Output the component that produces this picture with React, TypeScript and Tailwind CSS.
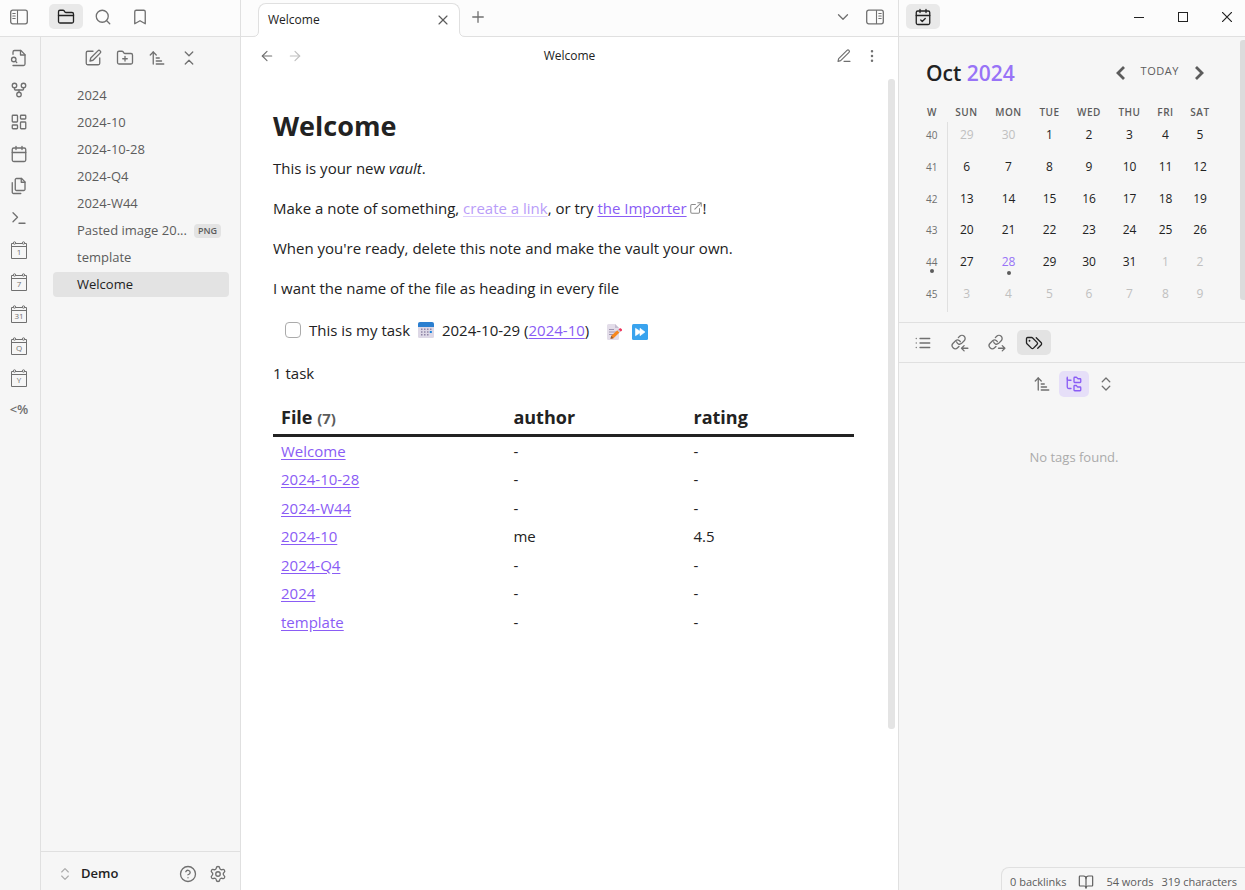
import type { ReactNode } from "react";
import {
  ArrowLeft,
  ArrowRight,
  ArrowUpNarrowWide,
  BookOpen,
  Bookmark,
  Calendar,
  ChevronDown,
  ChevronsDownUp,
  ChevronsUpDown,
  CircleQuestionMark,
  EllipsisVertical,
  FolderClosed,
  FolderPlus,
  FolderTree,
  GitFork,
  LayoutDashboard,
  Plus,
  Search,
  Settings,
  Terminal,
  X,
} from "lucide-react";

type SvgProps = { children: ReactNode; className?: string; width?: number };

function Svg({ children, className = "size-[18px]", width = 1.75 }: SvgProps) {
  return (
    <svg
      viewBox="0 0 24 24"
      className={className}
      fill="none"
      stroke="currentColor"
      strokeWidth={width}
      strokeLinecap="round"
      strokeLinejoin="round"
      aria-hidden="true"
    >
      {children}
    </svg>
  );
}

function SidebarIcon({ side }: { side: "left" | "right" }) {
  return (
    <svg viewBox="0 0 18 16" className="h-4 w-[18px]" fill="none" stroke="currentColor" strokeLinecap="round" aria-hidden="true">
      <rect x="0.7" y="1.2" width="16.6" height="13.6" rx="2" strokeWidth="1.3" />
      {side === "left" ? (
        <path d="M7.500 1.500v13M2.800 4.500h2.400M2.800 7h2.400M2.800 9.500h2.400" strokeWidth="1.1" />
      ) : (
        <path d="M10.500 1.500v13M12.800 4.500h2.400M12.800 7h2.400M12.800 9.500h2.400" strokeWidth="1.1" />
      )}
    </svg>
  );
}

function FileSearchIcon() {
  return (
    <Svg>
      <path d="M4 22h14a2 2 0 0 0 2-2V7.5L14.5 2H6a2 2 0 0 0-2 2v3" />
      <path d="M14 2v6h6" />
      <circle cx="5" cy="14" r="3" />
      <path d="m9 18-1.5-1.5" />
    </Svg>
  );
}

function FilesIcon() {
  return (
    <Svg>
      <path d="M15.5 2H8.6c-.4 0-.8.2-1.1.5-.3.3-.5.7-.5 1.1v12.8c0 .4.2.8.5 1.1.3.3.7.5 1.1.5h9.8c.4 0 .8-.2 1.1-.5.3-.3.5-.7.5-1.1V6.5L15.5 2z" />
      <path d="M3 7.6v12.8c0 .4.2.8.5 1.1.3.3.7.5 1.1.5h9.8" />
      <path d="M15 2v5h5" />
    </Svg>
  );
}

function EditIcon() {
  return (
    <Svg>
      <path d="M12 3H5a2 2 0 0 0-2 2v14a2 2 0 0 0 2 2h14a2 2 0 0 0 2-2v-7" />
      <path d="M18.5 2.5a2.12 2.12 0 0 1 3 3L12 15l-4 1 1-4Z" />
    </Svg>
  );
}

function PenLineIcon() {
  return (
    <Svg className="size-4">
      <path d="M12 20h9" />
      <path d="M16.5 3.5a2.12 2.12 0 0 1 3 3L7 19l-4 1 1-4Z" />
    </Svg>
  );
}

function CalendarCheckIcon() {
  return (
    <Svg>
      <rect x="3" y="4" width="18" height="18" rx="2" />
      <path d="M16 2v4M8 2v4M3 10h18M9 16l2 2 4-4" />
    </Svg>
  );
}

function ListIcon() {
  return (
    <Svg>
      <path d="M8 6h13M8 12h13M8 18h13M3 6h.01M3 12h.01M3 18h.01" />
    </Svg>
  );
}

function LinkArrowIcon({ direction }: { direction: "in" | "out" }) {
  return (
    <Svg>
      <path d="M7.500 10.500a4 4 0 0 0 6.300 2.300l3.800-3.800a4.200 4.200 0 0 0-6-6L9.800 4.800" />
      <path d="M12.500 10.300a4 4 0 0 0-6-1.600l-3.700 3.700a4.200 4.200 0 0 0 6 6l1.800-1.800" />
      {direction === "in" ? <path d="M22.500 19h-8M17.500 15.500 14 19l3.500 3.500" /> : <path d="M14 19h8M19 15.500l3.500 3.500-3.500 3.500" />}
    </Svg>
  );
}

function TagsIcon() {
  return (
    <Svg>
      <path d="M2 6v5.500c0 .5.2 1 .6 1.400l5.900 5.900a2 2 0 0 0 2.800 0l4.800-4.800a2 2 0 0 0 0-2.800L10.200 5.300A2 2 0 0 0 8.800 4.700H3.500A1.500 1.500 0 0 0 2 6Z" />
      <path d="M6 9h.01" strokeWidth="2.400" />
      <path d="m15 5 6.400 6.300a2.400 2.400 0 0 1 0 3.400L17 19" />
    </Svg>
  );
}

function HeavyChevron({ direction }: { direction: "left" | "right" }) {
  return (
    <svg viewBox="0 0 20 20" className="size-5" fill="none" stroke="currentColor" strokeWidth="2.800" aria-hidden="true">
      {direction === "left" ? <path d="m13 4-6 6 6 6" /> : <path d="m7 4 6 6-6 6" />}
    </svg>
  );
}

function DateIcon({ text }: { text: string }) {
  return (
    <svg viewBox="0 0 18 20" className="h-5 w-[18px]" fill="none" stroke="currentColor" aria-hidden="true">
      <path d="M1.500 3.500h15v15h-15ZM1.500 6.500h15" strokeWidth="1" />
      <circle cx="4.500" cy="3" r="1.200" strokeWidth="1" fill="#f6f6f6" />
      <circle cx="13.500" cy="3" r="1.200" strokeWidth="1" fill="#f6f6f6" />
      <text
        x="9"
        y="15.400"
        fontSize="8"
        textAnchor="middle"
        fill="currentColor"
        stroke="none"
        className="font-['Open_Sans',sans-serif] font-medium"
      >
        {text}
      </text>
    </svg>
  );
}

function CalendarEmoji() {
  return (
    <svg viewBox="0 0 18 18" className="mx-[3px] inline-block size-[18px] align-[-3px]" role="img" aria-label="Due date">
      <rect x="1" y="1.500" width="16" height="15.500" rx="1.500" fill="#ddd8e6" />
      <path d="M1 3a2 2 0 0 1 2-2h12a2 2 0 0 1 2 2v3H1Z" fill="#2b7fd0" />
      <g fill="#8f84a6">
        <path d="M7 7.500h1.500V9H7ZM10 7.500h1.500V9H10ZM13 7.500h1.500V9H13ZM4 10.200h1.500v1.500H4ZM7 10.200h1.500v1.500H7ZM10 10.200h1.500v1.500H10ZM4 13h1.500v1.500H4ZM7 13h1.500v1.500H7ZM10 13h1.500v1.500H10ZM4 7.500h1.500V9H4Z" />
      </g>
      <path d="M12.800 10h2v2h-2Z" fill="#1683dc" />
    </svg>
  );
}

function MemoEmoji() {
  return (
    <svg viewBox="0 0 18 18" className="size-[18px]" aria-hidden="true">
      <path d="M2 2.500A1.500 1.500 0 0 1 3.500 1H10l4 4v10.500A1.500 1.500 0 0 1 12.500 17h-9A1.500 1.500 0 0 1 2 15.500Z" fill="#e3dde9" />
      <path d="M10 1v4h4Z" fill="#c5bdd0" />
      <path d="M4 6.500h5M4 9h7M4 11.500h4" stroke="#a096b0" strokeWidth="1" />
      <path d="M5.500 15.800 6.300 12.800 12.300 7.300 14.500 9.600 8.500 15.200Z" fill="#f7871c" />
      <path d="m12.300 7.300 1.500-1.300 2.200 2.200-1.500 1.400Z" fill="#c9c5d0" />
      <path d="m13.600 6.200 1-.8c.5-.4 1-.3 1.400.1l.8.8c.4.5.4 1 0 1.400l-1 .8Z" fill="#f0315a" />
      <path d="M5.500 15.800 6.300 12.800 8.500 15.200Z" fill="#8b5a3c" />
    </svg>
  );
}

function ForwardEmoji() {
  return (
    <svg viewBox="0 0 18 18" className="size-[18px]" aria-hidden="true">
      <rect x="1" y="1" width="16" height="16" rx="1.500" fill="#39a3ee" />
      <path d="M4.500 5.300v7.400L9 9.800v2.900L14 9 9 5.300v2.900Z" fill="#fff" stroke="#fff" strokeWidth="0.600" strokeLinejoin="round" />
    </svg>
  );
}

function IconButton({ label, className = "", children }: { label: string; className?: string; children: ReactNode }) {
  return (
    <button type="button" aria-label={label} className={`flex shrink-0 items-center justify-center rounded-[5px] ${className}`}>
      {children}
    </button>
  );
}

const tab = "h-[25px] w-[34px]";
const action = "h-[26px] w-[30px]";

const ribbon: [string, ReactNode][] = [
  ["Open quick switcher", <FileSearchIcon />],
  ["Open graph view", <GitFork size={18} />],
  ["Create new canvas", <LayoutDashboard size={18} />],
  ["Open today's daily note", <Calendar size={18} />],
  ["Insert template", <FilesIcon />],
  ["Open command palette", <Terminal size={18} />],
  ["Open daily note", <DateIcon text="1" />],
  ["Open weekly note", <DateIcon text="7" />],
  ["Open monthly note", <DateIcon text="31" />],
  ["Open quarterly note", <DateIcon text="Q" />],
  ["Open yearly note", <DateIcon text="Y" />],
  ["Templater", <span className="text-[13px] font-semibold">&lt;%</span>],
];

const files = ["2024", "2024-10", "2024-10-28", "2024-Q4", "2024-W44", "Pasted image 20...", "template", "Welcome"];

function LeftSidebar() {
  return (
    <aside className="flex w-[241px] shrink-0 flex-col border-r border-[#e0e0e0]">
      <div className="flex h-[37px] items-center border-b border-[#e0e0e0] bg-[#fcfcfc] pb-[3px] pl-[2px] text-[#707070]">
        <IconButton label="Toggle left sidebar" className={tab}>
          <SidebarIcon side="left" />
        </IconButton>
        <div className="ml-[13px] flex gap-[3px]">
          <IconButton label="Files" className={`${tab} bg-[#e9e9e9] text-[#222222]`}>
            <FolderClosed size={18} />
          </IconButton>
          <IconButton label="Search" className={tab}>
            <Search size={18} />
          </IconButton>
          <IconButton label="Bookmarks" className={tab}>
            <Bookmark size={18} />
          </IconButton>
        </div>
      </div>
      <div className="flex grow">
        <nav className="flex w-[41px] shrink-0 flex-col items-center gap-[6px] border-r border-[#e0e0e0] pt-2 pr-[2px] text-[#707070]">
          {ribbon.map(([label, icon]) => (
            <IconButton key={label} label={label} className={action}>
              {icon}
            </IconButton>
          ))}
        </nav>
        <div className="flex min-w-0 grow flex-col">
          <div className="flex justify-center gap-[2px] pt-2 pb-3 text-[#707070]">
            <IconButton label="New note" className={action}>
              <EditIcon />
            </IconButton>
            <IconButton label="New folder" className={action}>
              <FolderPlus size={18} />
            </IconButton>
            <IconButton label="Change sort order" className={action}>
              <ArrowUpNarrowWide size={18} />
            </IconButton>
            <IconButton label="Collapse all" className={action}>
              <ChevronsDownUp size={18} />
            </IconButton>
          </div>
          <ul className="flex flex-col gap-[2px] pr-[11px] pl-3 text-[13px] text-[#5c5c5c]">
            {files.map((name) => (
              <li key={name}>
                <a
                  href="#note"
                  className={`flex h-[25px] items-center rounded-[4px] pr-2 pl-6 whitespace-nowrap ${
                    name === "Welcome" ? "bg-[#e3e3e3] text-[#222222]" : ""
                  }`}
                >
                  <span>{name}</span>
                  {name.startsWith("Pasted") && (
                    <span className="ml-auto rounded-[4px] bg-[#e3e3e3] px-1 text-[9px] leading-[14px] font-semibold">
                      PNG
                    </span>
                  )}
                </a>
              </li>
            ))}
          </ul>
          <div className="mt-auto flex h-[39px] items-center border-t border-[#e0e0e0] pt-[6px] pr-[7px] pl-4 text-[#707070]">
            <button type="button" className="flex items-center gap-2 text-[13px] font-semibold text-[#222222]">
              <ChevronsUpDown size={16} className="text-[#ababab]" />
              Demo
            </button>
            <div className="ml-auto flex">
              <IconButton label="Help" className={action}>
                <CircleQuestionMark size={18} />
              </IconButton>
              <IconButton label="Settings" className={action}>
                <Settings size={18} />
              </IconButton>
            </div>
          </div>
        </div>
      </div>
    </aside>
  );
}

const rows = [
  ["Welcome", "-", "-"],
  ["2024-10-28", "-", "-"],
  ["2024-W44", "-", "-"],
  ["2024-10", "me", "4.5"],
  ["2024-Q4", "-", "-"],
  ["2024", "-", "-"],
  ["template", "-", "-"],
];

const link = "text-[#8a5cf5] underline underline-offset-2";

function Note() {
  return (
    <article className="min-w-0 grow pt-[35px] pr-[34px] pl-8 text-[15px] leading-6 text-[#222222]">
      <h1 className="text-[27px] leading-8 font-bold">Welcome</h1>
      <div className="mt-[14px] flex flex-col gap-4">
        <p>
          This is your new <em>vault</em>.
        </p>
        <p>
          Make a note of something,{" "}
          <a href="#create" className="text-[#b99df9] underline decoration-[#dccefc] underline-offset-2">
            create a link
          </a>
          , or try{" "}
          <a href="#importer" className={link}>
            the Importer
          </a>
          <Svg className="ml-[2px] inline-block size-[14px] align-[-1px] text-[#8a8a8a]">
            <path d="M18 13v6a2 2 0 0 1-2 2H5a2 2 0 0 1-2-2V8a2 2 0 0 1 2-2h6M15 3h6v6M10 14 21 3" />
          </Svg>
          !
        </p>
        <p>When you're ready, delete this note and make the vault your own.</p>
        <p>I want the name of the file as heading in every file</p>
      </div>
      <div className="mt-[18px] flex items-center pl-3">
        <input
          id="task"
          type="checkbox"
          className="mr-2 size-4 appearance-none rounded-[4px] border border-[#ababab] bg-white"
        />
        <label htmlFor="task">
          This is my task <CalendarEmoji /> 2024-10-29 (
        </label>
        <a href="#month" className={link}>
          2024-10
        </a>
        <span>)</span>
        <button type="button" aria-label="Edit task" className="mt-1 ml-4">
          <MemoEmoji />
        </button>
        <button type="button" aria-label="Postpone task" className="mt-1 ml-2">
          <ForwardEmoji />
        </button>
      </div>
      <p className="mt-[19px]">1 task</p>
      <table className="mt-4 h-[235px] w-full table-fixed text-left">
        <thead className="text-[18px]">
          <tr className="h-[34px] border-b-3 border-[#222222]">
            <th className="w-2/5 px-2 font-bold">
              File <span className="text-[15px] text-[#5c5c5c]">(7)</span>
            </th>
            <th className="w-[31%] px-2 font-bold">author</th>
            <th className="px-2 font-bold">rating</th>
          </tr>
        </thead>
        <tbody>
          {rows.map(([file, author, rating]) => (
            <tr key={file}>
              <td className="px-2">
                <a href="#file" className={link}>
                  {file}
                </a>
              </td>
              <td className="px-2">{author}</td>
              <td className="px-2">{rating}</td>
            </tr>
          ))}
        </tbody>
      </table>
    </article>
  );
}

function Editor() {
  return (
    <main className="flex min-w-0 grow flex-col bg-white text-[12px] text-[#222222]">
      <div className="flex h-[37px] items-end border-b border-[#e0e0e0] bg-[#fcfcfc] pr-[7px] pl-[17px] text-[#707070]">
        <div className="relative -mb-px flex h-[34px] w-[202px] items-center justify-between rounded-t-lg border border-b-0 border-[#e0e0e0] bg-white pr-2 pb-[2px] pl-[9px] text-[#222222]">
          <svg viewBox="0 0 6 6" className="absolute bottom-0 -left-[6px] size-[6px]" aria-hidden="true">
            <path d="M0 6V5.500Q5.500 5.500 5.500 0H6V6Z" fill="#fff" />
            <path d="M0 5.500Q5.500 5.500 5.500 0" fill="none" stroke="#e0e0e0" />
          </svg>
          <svg viewBox="0 0 6 6" className="absolute -right-[6px] bottom-0 size-[6px]" aria-hidden="true">
            <path d="M6 6V5.500Q.5 5.500.5 0H0V6Z" fill="#fff" />
            <path d="M6 5.500Q.5 5.500.5 0" fill="none" stroke="#e0e0e0" />
          </svg>
          <span>Welcome</span>
          <button type="button" aria-label="Close tab">
            <X size={16} className="text-[#5c5c5c]" />
          </button>
        </div>
        <IconButton label="New tab" className={`mb-[6px] ml-[3px] ${action}`}>
          <Plus size={18} />
        </IconButton>
        <div className="mb-[6px] ml-auto flex">
          <IconButton label="Tab list" className="h-[26px] w-8">
            <ChevronDown size={18} />
          </IconButton>
          <IconButton label="Toggle right sidebar" className="h-[26px] w-8">
            <SidebarIcon side="right" />
          </IconButton>
        </div>
      </div>
      <div className="flex h-[38px] items-center px-3 text-[#707070]">
        <div className="flex">
          <IconButton label="Back" className="h-6 w-7">
            <ArrowLeft size={16} />
          </IconButton>
          <IconButton label="Forward" className="h-6 w-7 text-[#c0c0c0]">
            <ArrowRight size={16} />
          </IconButton>
        </div>
        <span className="grow text-center text-[#222222]">Welcome</span>
        <div className="flex">
          <IconButton label="Edit" className="h-6 w-7">
            <PenLineIcon />
          </IconButton>
          <IconButton label="More options" className="h-6 w-7">
            <EllipsisVertical size={16} />
          </IconButton>
        </div>
      </div>
      <div className="flex grow">
        <Note />
        <div className="mt-1 mr-[3px] h-[650px] w-[7px] shrink-0 rounded-[3px] bg-[#e4e4e4]" />
      </div>
    </main>
  );
}

const weeks = [
  [40, 29, 30, 1, 2, 3, 4, 5],
  [41, 6, 7, 8, 9, 10, 11, 12],
  [42, 13, 14, 15, 16, 17, 18, 19],
  [43, 20, 21, 22, 23, 24, 25, 26],
  [44, 27, 28, 29, 30, 31, 1, 2],
  [45, 3, 4, 5, 6, 7, 8, 9],
];

function isOutside(week: number, day: number) {
  return (week === 40 && day > 20) || (week >= 44 && day < 20);
}

function CalendarPanel() {
  return (
    <section className="flex h-[285px] pt-[3px]">
      <div className="min-w-0 grow pt-[15px] pr-[22px] pl-[18px]">
        <div className="flex items-center pr-[9px] pl-[9px]">
          <h2 className="text-[21px] leading-9 font-semibold text-[#222222]">
            Oct <span className="text-[#9873f7]">2024</span>
          </h2>
          <div className="ml-auto flex items-center gap-[6px] text-[#5c5c5c]">
            <IconButton label="Previous month" className="size-5">
              <HeavyChevron direction="left" />
            </IconButton>
            <button type="button" className="px-1 pb-1 text-[11px] tracking-wider">
              TODAY
            </button>
            <IconButton label="Next month" className="size-5">
              <HeavyChevron direction="right" />
            </IconButton>
          </div>
        </div>
        <table className="mt-[11px] h-[210px] w-full table-fixed text-center text-[12px] text-[#222222]">
          <colgroup>
            <col className="w-[30px]" />
            <col className="w-[39px]" />
            <col className="w-[45px]" />
            <col className="w-[37px]" />
            <col className="w-[42px]" />
            <col className="w-[39px]" />
            <col className="w-[33px]" />
            <col className="w-[36px]" />
          </colgroup>
          <thead>
            <tr className="h-5 text-[10px] leading-[14px] tracking-wider text-[#5c5c5c]">
              {["W", "SUN", "MON", "TUE", "WED", "THU", "FRI", "SAT"].map((d) => (
                <th key={d} className="font-semibold">
                  {d}
                </th>
              ))}
            </tr>
          </thead>
          <tbody>
            {weeks.map(([week, ...days]) => (
              <tr key={week}>
                <td className="border-r border-[#e0e0e0] text-[10px] text-[#707070]">
                  <div className="flex flex-col items-center pb-px leading-[14px]">
                    {week}
                    <span className={`size-1 rounded-full ${week === 44 ? "bg-[#5c5c5c]" : ""}`} />
                  </div>
                </td>
                {days.map((day) => (
                  <td
                    key={day}
                    className={
                      isOutside(week, day) ? "text-[#c0c0c0]" : day === 28 && week === 44 ? "text-[#9873f7]" : ""
                    }
                  >
                    <div className="flex flex-col items-center pb-px leading-[18px]">
                      {day}
                      <span className={`size-1 rounded-full ${day === 28 && week === 44 ? "bg-[#5c5c5c]" : ""}`} />
                    </div>
                  </td>
                ))}
              </tr>
            ))}
          </tbody>
        </table>
      </div>
      <div className="h-[260px] w-[5px] shrink-0 rounded-l-[3px] bg-[#dcdcdc]" />
    </section>
  );
}

function RightSidebar() {
  return (
    <aside className="flex w-[347px] shrink-0 flex-col border-l border-[#e0e0e0]">
      <div className="flex h-[37px] items-center border-b border-[#e0e0e0] bg-[#fcfcfc] pb-[3px] pl-[7px]">
        <IconButton label="Calendar" className={`${tab} bg-[#e9e9e9] text-[#222222]`}>
          <CalendarCheckIcon />
        </IconButton>
        <div className="ml-auto flex text-[#222222]">
          <IconButton label="Minimize" className="h-8 w-11">
            <svg viewBox="0 0 10 10" className="size-[10px]" stroke="currentColor" aria-hidden="true">
              <path d="M0 5.500h10" />
            </svg>
          </IconButton>
          <IconButton label="Maximize" className="h-8 w-11">
            <svg viewBox="0 0 10 10" className="size-[10px]" fill="none" stroke="currentColor" aria-hidden="true">
              <rect x="0.500" y="0.500" width="9" height="9" />
            </svg>
          </IconButton>
          <IconButton label="Close" className="h-8 w-10 pl-1">
            <svg viewBox="0 0 10 10" className="size-[10px]" stroke="currentColor" strokeWidth="1.200" aria-hidden="true">
              <path d="m0 0 10 10M10 0 0 10" />
            </svg>
          </IconButton>
        </div>
      </div>
      <CalendarPanel />
      <div className="flex h-[41px] items-center gap-[3px] border-y border-[#e0e0e0] pl-[7px] text-[#707070]">
        <IconButton label="Outline" className={tab}>
          <ListIcon />
        </IconButton>
        <IconButton label="Backlinks" className={tab}>
          <LinkArrowIcon direction="in" />
        </IconButton>
        <IconButton label="Outgoing links" className={tab}>
          <LinkArrowIcon direction="out" />
        </IconButton>
        <IconButton label="Tags" className={`${tab} bg-[#e3e3e3] text-[#222222]`}>
          <TagsIcon />
        </IconButton>
      </div>
      <div className="flex justify-center gap-[2px] pt-2 pl-1 text-[#707070]">
        <IconButton label="Change sort order" className={action}>
          <ArrowUpNarrowWide size={18} />
        </IconButton>
        <IconButton label="Show nested tags" className={`${action} bg-[#e6dff8] text-[#8a5cf5]`}>
          <FolderTree size={18} />
        </IconButton>
        <IconButton label="Expand all" className={action}>
          <ChevronsUpDown size={18} />
        </IconButton>
      </div>
      <p className="mt-[50px] pl-1 text-center text-[13px] leading-5 text-[#ababab]">No tags found.</p>
      <footer className="mt-auto flex h-[23px] items-center self-end rounded-tl-lg border-t border-l border-[#e0e0e0] pt-[6px] pr-2 pl-2 text-[11px] whitespace-nowrap text-[#5c5c5c]">
        <span>0 backlinks</span>
        <BookOpen size={16} className="mx-3" />
        <span>54 words</span>
        <span className="ml-2">319 characters</span>
      </footer>
    </aside>
  );
}

export default function App() {
  return (
    <div className="flex min-h-screen bg-[#f6f6f6] font-['Open_Sans',sans-serif] [&_.lucide]:stroke-[1.75]">
      <LeftSidebar />
      <Editor />
      <RightSidebar />
    </div>
  );
}
